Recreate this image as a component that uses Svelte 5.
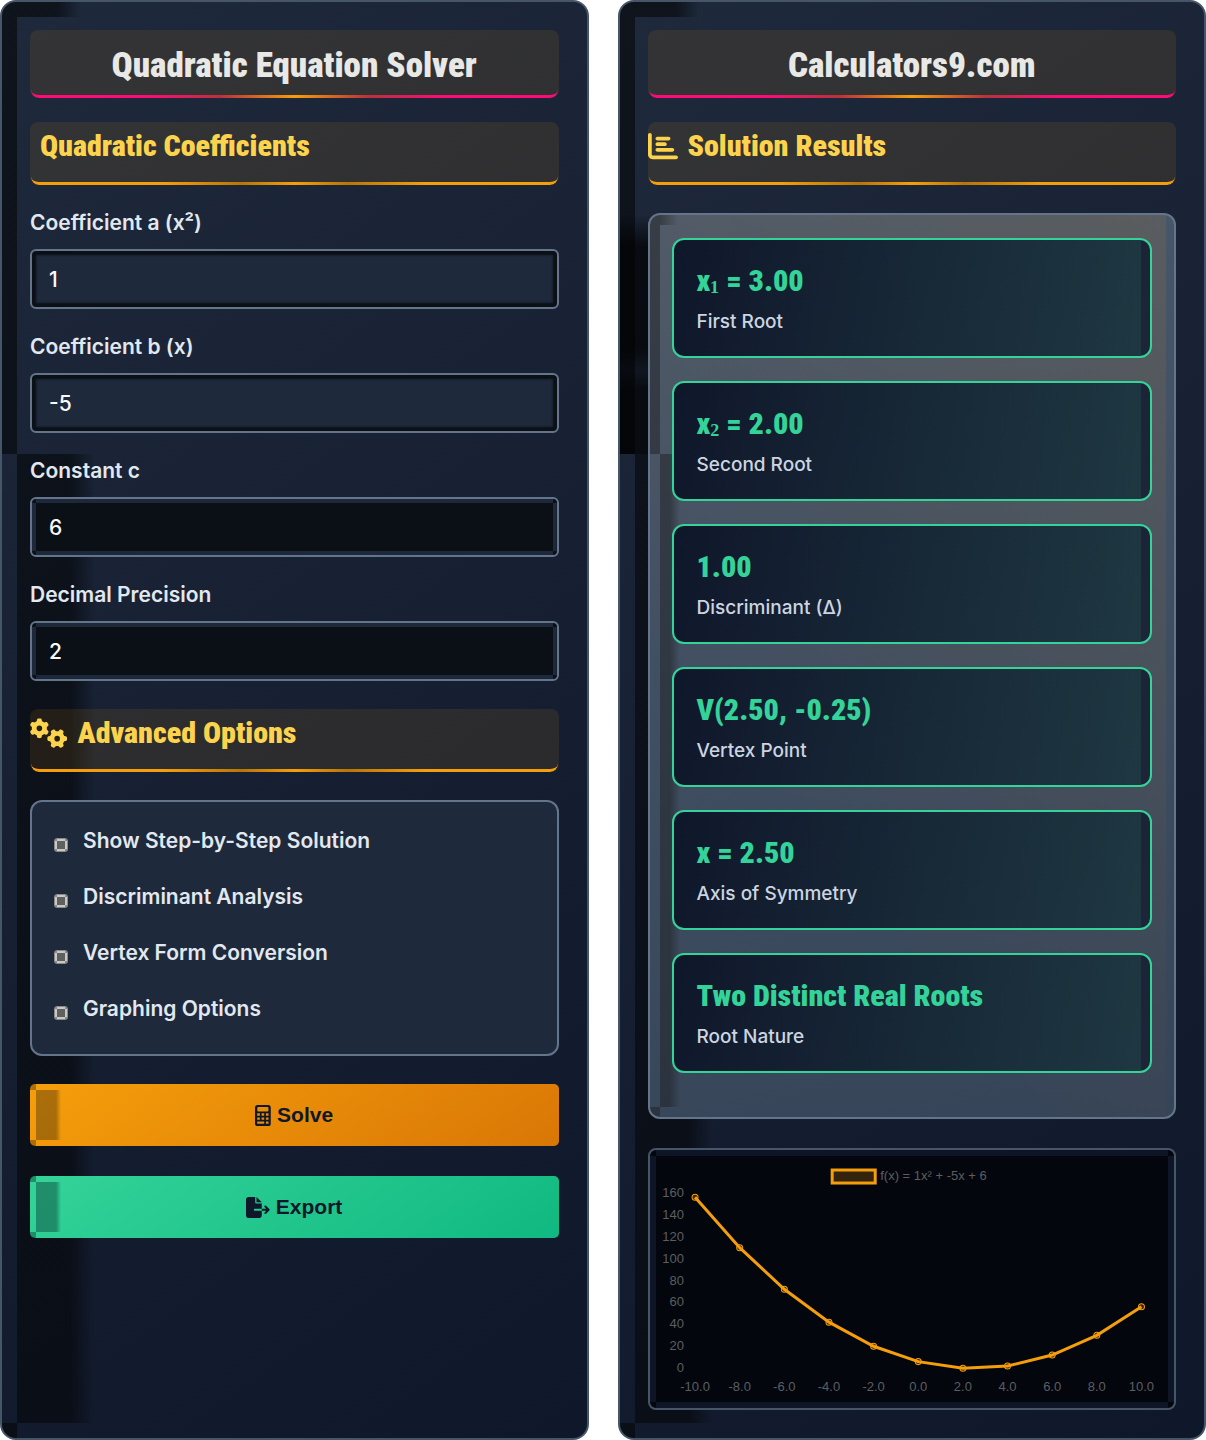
<script lang="ts">
  let coefA = $state(1);
  let coefB = $state(-5);
  let coefC = $state(6);
  let precision = $state(2);

  const options = ['Show Step-by-Step Solution', 'Discriminant Analysis', 'Vertex Form Conversion', 'Graphing Options'];

  const disc = $derived(coefB * coefB - 4 * coefA * coefC);
  const axis = $derived(-coefB / (2 * coefA));
  const spread = $derived(Math.sqrt(Math.abs(disc)) / (2 * coefA));
  const fmt = (n: number) => n.toFixed(precision);
  const f = (x: number) => coefA * x * x + coefB * x + coefC;

  const nature = $derived(
    disc > 0 ? 'Two Distinct Real Roots' : disc === 0 ? 'One Repeated Root' : 'Complex Roots'
  );

  const results = $derived([
    { name: 'x', index: '₁', value: ` = ${fmt(axis + spread)}`, label: 'First Root' },
    { name: 'x', index: '₂', value: ` = ${fmt(axis - spread)}`, label: 'Second Root' },
    { value: fmt(disc), label: 'Discriminant (Δ)' },
    { value: `V(${fmt(axis)}, ${fmt(f(axis))})`, label: 'Vertex Point' },
    { value: `x = ${fmt(axis)}`, label: 'Axis of Symmetry' },
    { value: nature, label: 'Root Nature' },
  ]);

  // chart scales
  const xs = [-10, -8, -6, -4, -2, 0, 2, 4, 6, 8, 10];
  const ticks = [0, 20, 40, 60, 80, 100, 120, 140, 160];
  const px = (x: number) => 268 + x * 22.3;
  const py = (y: number) => 218 - y * 1.095;
  const points = $derived(xs.map((x) => ({ x: px(x), y: py(f(x)) })));
</script>

<main class="layout">
  <section class="panel">
    <h1 class="title">Quadratic Equation Solver</h1>
    <h2 class="heading bare">Quadratic Coefficients</h2>

    <div class="fields">
      <div class="field">
        <label for="a">Coefficient a (x²)</label>
        <input id="a" type="text" bind:value={coefA} />
      </div>
      <div class="field">
        <label for="b">Coefficient b (x)</label>
        <input id="b" type="text" bind:value={coefB} />
      </div>
      <div class="field">
        <label for="c">Constant c</label>
        <input id="c" class="deep" type="text" bind:value={coefC} />
      </div>
      <div class="field">
        <label for="precision">Decimal Precision</label>
        <input id="precision" class="deep" type="text" bind:value={precision} />
      </div>
    </div>

    <h2 class="heading">
      <svg class="icon" viewBox="0 0 640 512" aria-hidden="true">
        <defs>
          <path
            id="gear"
            d="M308.5 135.3c7.1-6.3 9.9-16.2 6.2-25c-2.3-5.3-4.8-10.5-7.6-15.5L304 89.4c-3-5-6.3-9.9-9.8-14.6c-5.7-7.6-15.7-10.1-24.7-7.1l-28.2 9.3c-10.7-8.8-23-16-36.2-20.9L199 27.1c-1.9-9.3-9.1-16.7-18.5-17.8C173.9 8.4 167.2 8 160.4 8h-.7c-6.8 0-13.5 .4-20.1 1.2c-9.4 1.1-16.6 8.6-18.5 17.8L115 56.1c-13.3 5-25.5 12.1-36.2 20.9L50.5 67.8c-9-3-19-.5-24.7 7.1c-3.5 4.7-6.8 9.6-9.9 14.6l-3 5.3c-2.8 5-5.3 10.2-7.6 15.6c-3.7 8.7-.9 18.6 6.2 25l22.2 19.8C32.6 161.9 32 168.9 32 176s.6 14.1 1.7 20.9L11.5 216.7c-7.1 6.3-9.9 16.2-6.2 25c2.3 5.3 4.8 10.5 7.6 15.6l3 5.2c3 5.1 6.3 9.9 9.9 14.6c5.7 7.6 15.7 10.1 24.7 7.1l28.2-9.3c10.7 8.8 23 16 36.2 20.9l6.1 29.1c1.9 9.3 9.1 16.7 18.5 17.8c6.7 .8 13.5 1.2 20.4 1.2s13.7-.4 20.4-1.2c9.4-1.1 16.6-8.6 18.5-17.8l6.1-29.1c13.3-5 25.5-12.1 36.2-20.9l28.2 9.3c9 3 19 .5 24.7-7.1c3.5-4.7 6.8-9.5 9.8-14.6l3.1-5.4c2.8-5 5.3-10.2 7.6-15.5c3.7-8.7 .9-18.6-6.2-25l-22.2-19.8c1.1-6.8 1.7-13.8 1.7-20.9s-.6-14.1-1.7-20.9l22.2-19.8zM112 176a48 48 0 1 1 96 0 48 48 0 1 1 -96 0z"
          />
        </defs>
        <use href="#gear" />
        <use href="#gear" transform="translate(464 352) rotate(90) translate(-160 -176)" />
      </svg>
      Advanced Options
    </h2>

    <div class="options">
      {#each options as option}
        <label class="option">
          <input type="checkbox" />
          <span>{option}</span>
        </label>
      {/each}
    </div>

    <button class="action solve" type="button">
      <svg class="icon" viewBox="0 0 384 512" aria-hidden="true">
        <path
          fill-rule="evenodd"
          d="M64 0h256a64 64 0 0 1 64 64v384a64 64 0 0 1-64 64H64a64 64 0 0 1-64-64V64A64 64 0 0 1 64 0zM80 48a24 24 0 0 0-24 24v64a24 24 0 0 0 24 24h224a24 24 0 0 0 24-24V72a24 24 0 0 0-24-24zM54 204h64v60H54zM160 204h64v60h-64zM266 204h64v60h-64zM54 302h64v60H54zM160 302h64v60h-64zM266 302h64v60h-64zM54 400h170v56H54zM266 400h64v56h-64z"
        />
      </svg>
      Solve
    </button>
    <button class="action export" type="button">
      <svg class="icon" viewBox="0 0 576 512" aria-hidden="true">
        <path
          d="M0 64C0 28.7 28.7 0 64 0H224V128c0 17.7 14.3 32 32 32H384V288H216c-13.3 0-24 10.7-24 24s10.7 24 24 24H384V448c0 35.3-28.7 64-64 64H64c-35.3 0-64-28.7-64-64V64zM384 336V288H494.1l-39-39c-9.4-9.4-9.4-24.6 0-33.9s24.6-9.4 33.9 0l80 80c9.4 9.4 9.4 24.6 0 33.9l-80 80c-9.4 9.4-24.6 9.4-33.9 0s-9.4-24.6 0-33.9l39-39H384zm0-208H256V0L384 128z"
        />
      </svg>
      Export
    </button>
  </section>

  <section class="panel output">
    <h1 class="title">Calculators9.com</h1>
    <h2 class="heading">
      <svg class="icon" viewBox="0 0 512 512" aria-hidden="true">
        <path
          d="M32 32c17.7 0 32 14.3 32 32V400c0 8.8 7.2 16 16 16H480c17.7 0 32 14.3 32 32s-14.3 32-32 32H80c-44.2 0-80-35.8-80-80V64C0 46.3 14.3 32 32 32zm96 96c0-17.7 14.3-32 32-32l192 0c17.7 0 32 14.3 32 32s-14.3 32-32 32l-192 0c-17.7 0-32-14.3-32-32zm32 64H288c17.7 0 32 14.3 32 32s-14.3 32-32 32H160c-17.7 0-32-14.3-32-32s14.3-32 32-32zm0 96H416c17.7 0 32 14.3 32 32s-14.3 32-32 32H160c-17.7 0-32-14.3-32-32s14.3-32 32-32z"
        />
      </svg>
      Solution Results
    </h2>

    <div class="results">
      {#each results as result}
        <article class="card">
          <div class="value">{#if result.index}{result.name}<span class="index">{result.index}</span>{/if}{result.value}</div>
          <div class="caption">{result.label}</div>
        </article>
      {/each}
    </div>

    <div class="chart">
      <svg viewBox="0 0 524 258" role="img" aria-label="Graph of the quadratic">
        <rect class="key" x="182" y="20" width="43" height="13" />
        <text x="230" y="30">f(x) = {coefA}x² + {coefB}x + {coefC}</text>
        {#each ticks as tick}
          <text class="end" x="34" y={py(tick) + 4}>{tick}</text>
        {/each}
        {#each xs as x}
          <text class="mid" x={px(x)} y="241">{x.toFixed(1)}</text>
        {/each}
        <polyline points={points.map((p) => `${p.x},${p.y}`).join(' ')} />
        {#each points as p}
          <circle cx={p.x} cy={p.y} r="3" />
        {/each}
      </svg>
    </div>
  </section>
</main>

<style>
  :global(body) {
    margin: 0;
    background: #fff;
  }

  .layout {
    display: grid;
    grid-template-columns: 1fr 1fr;
    gap: 29px;
    min-height: 100vh;
    font-family: Inter, sans-serif;
    color: #e2e8f0;
  }

  .layout * {
    box-sizing: border-box;
  }

  .panel {
    --shade: rgba(4, 6, 8, 0.6);
    --glow: linear-gradient(transparent, transparent);
    min-width: 0;
    padding: 28px;
    border: 2px solid #475569;
    border-radius: 16px;
    display: flex;
    flex-direction: column;
    background:
      var(--glow) 0 212px / 32px 240px no-repeat,
      linear-gradient(90deg, var(--shade) 40px, transparent 64px) 15px 0 / 64px 15px no-repeat,
      linear-gradient(var(--shade) 0 0) 0 0 / 15px 452px no-repeat,
      linear-gradient(90deg, var(--shade) 54px, transparent 78px) 15px 452px / 80px calc(100% - 467px) no-repeat,
      linear-gradient(var(--shade) 0 0) 0 100% / 15px 15px no-repeat,
      linear-gradient(145deg, #1e293b, #0f172a);
  }

  /* shadow the first two cards throw to the left */
  .output {
    --glow: linear-gradient(
      rgba(0, 0, 0, 0),
      rgba(0, 0, 0, 0.7) 32px,
      rgba(0, 0, 0, 0.7) 136px,
      rgba(0, 0, 0, 0.4) 156px,
      rgba(0, 0, 0, 0.7) 176px
    );
  }

  .title,
  .heading {
    position: relative;
    margin: 0;
    border-radius: 8px;
    background: rgba(245, 158, 11, 0.1);
    font-family: 'Roboto Condensed', Roboto, sans-serif;
    font-weight: 900;
  }

  .title {
    height: 68px;
    margin-bottom: 24px;
    font-size: 35px;
    line-height: 72px;
    text-align: center;
    color: #e8e8e6;
  }

  .heading {
    display: flex;
    gap: 10px;
    height: 63px;
    margin-bottom: 28px;
    font-size: 30px;
    line-height: 48px;
    color: #fcd34d;
  }

  .bare {
    padding-left: 10px;
    margin-bottom: 24px;
  }

  /* underline that follows the rounded bottom corners */
  .title::after,
  .heading::after {
    content: '';
    position: absolute;
    inset: auto 1px 0;
    height: 16px;
    border-bottom: 3px solid transparent;
    border-radius: 0 0 8px 8px;
    background: linear-gradient(90deg, #f59e0b 25%, #b87608 40%, #f59e0b 50%, #b87608 60%, #f59e0b 75%) border-box;
    mask: linear-gradient(#000 0 0) padding-box exclude, linear-gradient(#000 0 0) border-box;
  }

  .title::after {
    background: linear-gradient(90deg, #ff0a78 22%, #b8323c 36%, #f59e0b 50%, #b8323c 64%, #ff0a78 78%) border-box;
  }

  .icon {
    height: 1em;
    fill: currentColor;
  }

  .heading .icon {
    margin-top: 9px;
  }

  .fields {
    display: flex;
    flex-direction: column;
    gap: 24px;
    margin-bottom: 28px;
  }

  .field {
    display: flex;
    flex-direction: column;
  }

  .field label {
    margin-bottom: 12px;
    font-size: 21px;
    font-weight: 600;
    line-height: 28px;
  }

  .field input {
    height: 60px;
    padding: 0 17px;
    border: 2px solid #64748b;
    border-radius: 6px;
    outline: none;
    background: #1e293b;
    box-shadow: inset 0 0 2px 4px #0b0f16;
    font: 500 21px Inter, sans-serif;
    color: #f8fafc;
  }

  .field .deep,
  .chart {
    --edge: 8px;
    --rim: #1d283a;
    --well: #0b0f16;
    background:
      linear-gradient(var(--well) 0 0) center / calc(100% - var(--edge)) calc(100% - var(--edge)) no-repeat,
      linear-gradient(var(--rim) 0 0) center / calc(100% - var(--edge)) 100% no-repeat,
      linear-gradient(var(--rim) 0 0) center / 100% calc(100% - var(--edge)) no-repeat,
      var(--well);
    box-shadow: none;
  }

  .options {
    height: 256px;
    margin-bottom: 28px;
    padding: 25px 22px;
    border: 2px solid #64748b;
    border-radius: 12px;
    display: flex;
    flex-direction: column;
    gap: 28px;
    background: #1e293b;
  }

  .option {
    display: flex;
    align-items: center;
    gap: 15px;
    font-size: 21px;
    font-weight: 600;
    line-height: 28px;
  }

  .option input {
    appearance: none;
    width: 14px;
    height: 14px;
    margin: 8px 0 0;
    border: 1px solid #8a8a88;
    border-radius: 3px;
    background:
      linear-gradient(#606060 0 0) center / 8px 8px no-repeat,
      linear-gradient(#c8c8c6 0 0) center / 8px 100% no-repeat,
      linear-gradient(#c8c8c6 0 0) center / 100% 8px no-repeat,
      #8a8a88;
  }

  .action {
    display: flex;
    align-items: center;
    justify-content: center;
    gap: 6px;
    height: 62px;
    margin-bottom: 30px;
    padding: 0;
    border: 0;
    border-radius: 5px;
    background:
      linear-gradient(90deg, var(--tint) 20px, transparent 25px) 6px 6px / 26px calc(100% - 12px) no-repeat,
      linear-gradient(var(--tint) 0 0) 0 0 / 6px 6px no-repeat,
      linear-gradient(var(--tint) 0 0) 0 100% / 6px 6px no-repeat,
      var(--base);
    font: 700 21px 'Liberation Sans', Arial, sans-serif;
    color: #0f172a;
  }

  .solve {
    --tint: rgba(60, 40, 10, 0.4);
    --base: linear-gradient(145deg, #f59e0b, #d97706);
  }

  .export {
    --tint: rgba(10, 60, 50, 0.45);
    --base: linear-gradient(145deg, #34d399, #10b981);
  }

  .results {
    --dim: rgba(30, 32, 36, 0.5);
    margin-bottom: 29px;
    padding: 23px 22px 44px;
    border: 2px solid #64748b;
    border-radius: 12px;
    display: flex;
    flex-direction: column;
    gap: 23px;
    background:
      linear-gradient(90deg, var(--dim), transparent) 10px 0 / 18px 10px no-repeat,
      linear-gradient(var(--dim) 0 0) 0 0 / 10px 239px no-repeat,
      linear-gradient(90deg, var(--dim) 10px, transparent 20px) 10px 239px / 20px calc(100% - 249px) no-repeat,
      linear-gradient(var(--dim) 0 0) 0 100% / 10px 10px no-repeat,
      linear-gradient(50deg, transparent 30%, rgba(245, 158, 11, 0.1)) 0 0 / calc(100% - 8px) 100% no-repeat,
      linear-gradient(165deg, #4a586b, #364457);
  }

  .card {
    height: 120px;
    padding: 24px 23px;
    border: 2px solid #34d399;
    border-radius: 12px;
    background:
      linear-gradient(90deg, transparent, rgba(52, 211, 153, 0.1)) 0 0 / calc(100% - 9px) 100% no-repeat,
      linear-gradient(110deg, #0f172a, #1c2638);
  }

  .value {
    font-family: 'Roboto Condensed', Roboto, sans-serif;
    font-size: 30px;
    font-weight: 900;
    line-height: 34px;
    color: #34d399;
    white-space: pre;
  }

  .index {
    font-family: 'Liberation Serif', serif;
    line-height: 0;
    vertical-align: 4px;
  }

  .caption {
    margin-top: 10px;
    font-size: 19px;
    font-weight: 500;
    line-height: 28px;
    color: #cbd5e1;
  }

  .chart {
    --edge: 12px;
    --rim: #0d1526;
    --well: #03060d;
    border: 2px solid #475569;
    border-radius: 8px;
  }

  .chart svg {
    display: block;
    width: 100%;
    font: 13px 'Liberation Sans', Arial, sans-serif;
  }

  .chart text {
    fill: #5c5e61;
  }

  .end {
    text-anchor: end;
  }

  .mid {
    text-anchor: middle;
  }

  .key {
    fill: #34240d;
    stroke: #f59e0b;
    stroke-width: 3;
  }

  polyline {
    fill: none;
    stroke: #f59e0b;
    stroke-width: 3;
  }

  circle {
    fill: rgba(245, 158, 11, 0.2);
    stroke: #f59e0b;
  }
</style>
